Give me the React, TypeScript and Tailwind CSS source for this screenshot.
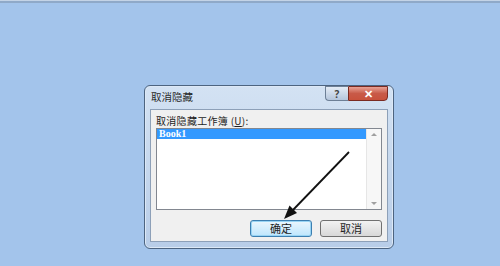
import React, { FC } from "react";

const cjk = { fontFamily: '"Noto Sans CJK SC", "Liberation Sans", sans-serif' };

const ListBox: FC = () => {
  return (
    <div className="flex h-[82px] w-[226px] border border-[#828790] bg-white">
      <div className="flex-1">
        <div
          className="h-[10px] bg-[#3399ff] pl-[2px] text-[10px] font-bold leading-[10px] text-white"
          style={{ fontFamily: '"Liberation Serif", serif' }}
        >
          Book1
        </div>
      </div>
      <div className="flex w-[15px] flex-col justify-between border-l border-[#e6e6e6] bg-[#f7f7f7] py-[4px]">
        <div className="mx-auto h-0 w-0 border-x-[3px] border-b-[3px] border-x-transparent border-b-[#a0a0a0]" />
        <div className="mx-auto h-0 w-0 border-x-[3px] border-t-[3px] border-x-transparent border-t-[#a0a0a0]" />
      </div>
    </div>
  );
};

const Dialog: FC = () => {
  return (
    <div className="flex h-[164px] w-[250px] flex-col rounded-[6px] border border-[#4d6480] bg-gradient-to-b from-[#d3e2f3] to-[#b8cde8] px-[5px] pb-[6px] shadow-[inset_0_0_0_1px_#dce8f6]">
      <div className="flex h-[23px] items-start">
        <div className="flex-1 pl-[1px] pt-[4px] text-[10.5px] leading-[14px] text-[#2a2a2a]" style={cjk}>
          取消隐藏
        </div>
        <div className="flex">
          <div className="flex h-[15px] w-[23px] items-center justify-center rounded-bl-[4px] border border-r-0 border-[#6d7f96] bg-gradient-to-b from-[#e4ecf6] to-[#b5c6dc] text-[10px] font-bold leading-none text-[#444]">
            ?
          </div>
          <div className="flex h-[15px] w-[40px] items-center justify-center rounded-br-[4px] border border-[#7a2a22] bg-gradient-to-b from-[#e7a195] via-[#c85a48] to-[#c8513c] text-[11px] font-bold leading-none text-white">
            ✕
          </div>
        </div>
      </div>
      <div className="flex flex-1 flex-col border border-[#8da0b8] bg-[#f0f0f0] px-[5px] pt-[4px]">
        <div className="h-[14px] text-[10px] leading-[14px] tracking-[0.3px] text-[#1e1e1e]" style={cjk}>
          取消隐藏工作簿 (<span className="underline">U</span>):
        </div>
        <ListBox />
        <div className="mt-[10px] flex justify-end gap-[8px]">
          <div
            className="flex h-[17px] w-[62px] items-center justify-center rounded-[3px] border border-[#3c7fb1] bg-gradient-to-b from-[#eaf6fd] to-[#bee6fd] text-[11px] leading-none text-[#1e1e1e] shadow-[inset_0_0_0_1px_#98d4f4]"
            style={cjk}
          >
            确定
          </div>
          <div
            className="flex h-[17px] w-[62px] items-center justify-center rounded-[3px] border border-[#707070] bg-gradient-to-b from-[#f2f2f2] to-[#d8d8d8] text-[11px] leading-none text-[#1e1e1e]"
            style={cjk}
          >
            取消
          </div>
        </div>
      </div>
    </div>
  );
};

const App: FC = () => {
  return (
    <div className="relative h-[266px] w-[500px] overflow-hidden bg-[#a3c4eb]">
      <div className="h-[1px] bg-[#c3d3e6]" />
      <div className="h-[2px] bg-[#8fa9c8]" />
      <div className="pl-[144px] pt-[82px]">
        <Dialog />
      </div>
      <svg className="pointer-events-none absolute left-0 top-0" width="500" height="266">
        <line x1="349" y1="152" x2="292" y2="211" stroke="#111" strokeWidth="1.8" />
        <polygon points="284,219 297,213 289.5,205.5" fill="#111" />
      </svg>
    </div>
  );
};

export default App;
